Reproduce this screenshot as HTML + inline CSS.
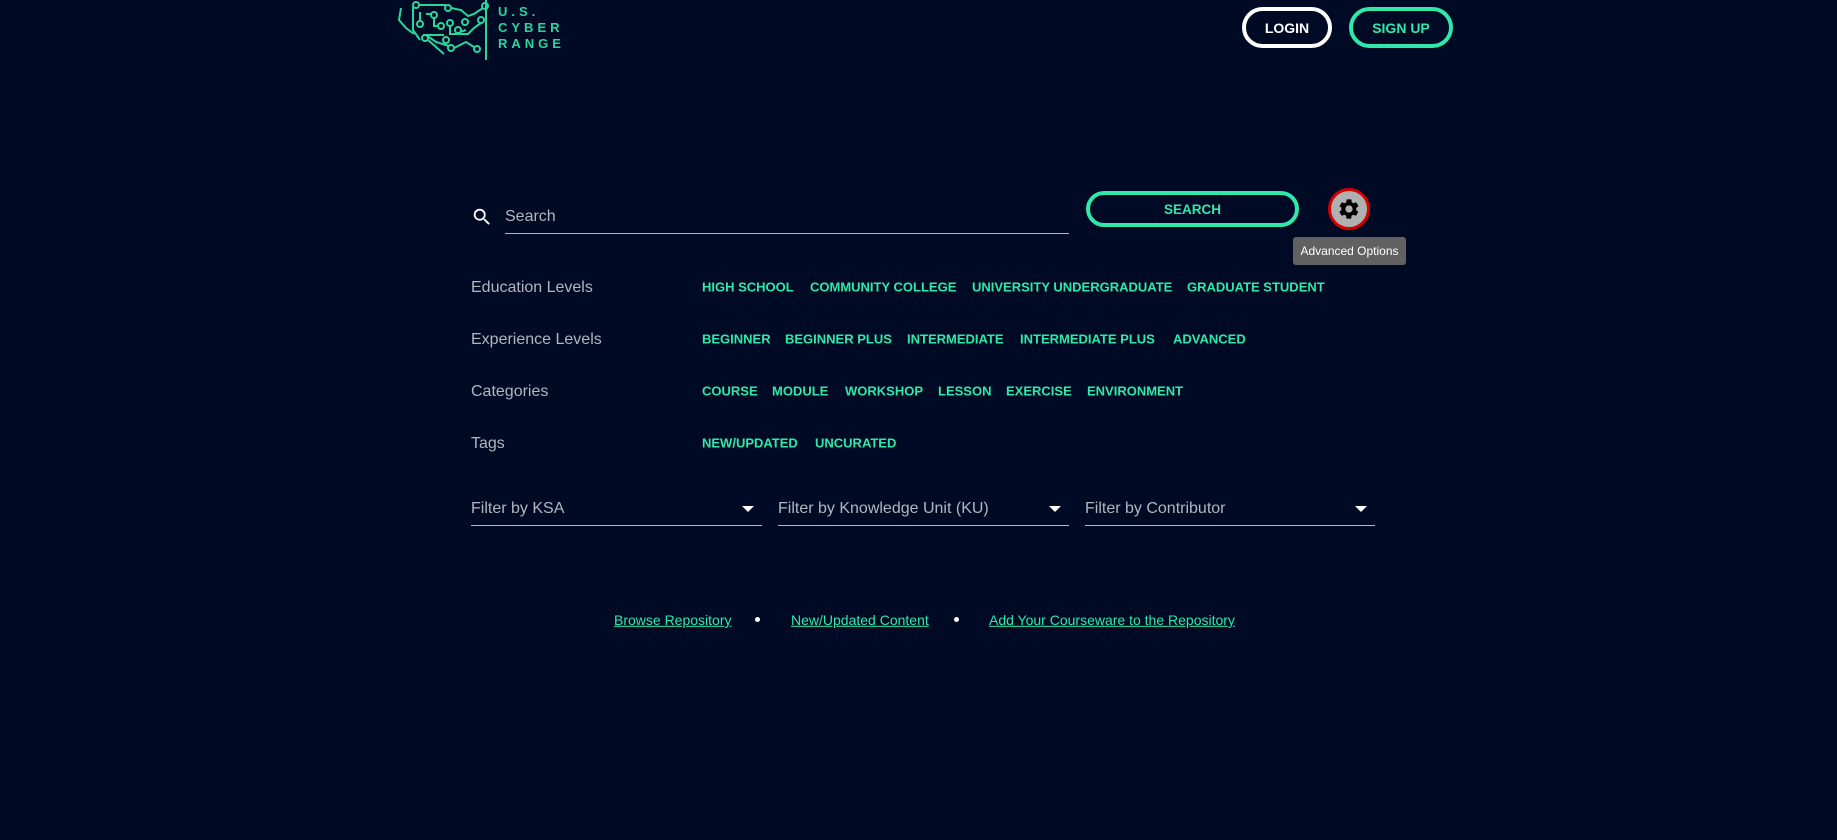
<!DOCTYPE html>
<html><head><meta charset="utf-8"><style>
*{margin:0;padding:0;box-sizing:border-box}
body{width:1837px;height:840px;background:#000a24;font-family:"Liberation Sans",sans-serif;position:relative;overflow:hidden}
.a{position:absolute;white-space:nowrap}
.lbl{color:#b3b6c0;font-size:16px;transform:translateY(-40%)}
.chip{color:#30e8aa;font-size:13px;font-weight:bold;transform:translateY(-50%)}
.btn{position:absolute;border-radius:22px;font-weight:bold;font-size:14px;display:flex;align-items:center;justify-content:center}
.fl{position:absolute;border-bottom:1px solid #b3b6c0;height:32px;color:#b3b6c0;font-size:16px}
.fl span.t{position:absolute;left:0;top:6px}
.fl .arr{position:absolute;right:8px;top:12px;width:0;height:0;border-left:6px solid transparent;border-right:6px solid transparent;border-top:6px solid #fff}
.lk{color:#30e8aa;text-decoration:underline;font-size:14px;transform:translateY(-45%)}
.dot{width:5px;height:5px;border-radius:50%;background:#fff}
</style></head><body>
<svg class="a" style="left:396px;top:0" width="160" height="62" viewBox="0 0 160 62" fill="none" stroke="#2ad69c" stroke-width="2">
<circle cx="20" cy="5" r="3"/><circle cx="52" cy="8" r="3"/><circle cx="89" cy="6" r="3"/><circle cx="38" cy="15" r="3"/><circle cx="24" cy="24" r="3"/><circle cx="45" cy="26" r="3"/><circle cx="54" cy="23" r="3"/><circle cx="69" cy="22" r="3"/><circle cx="62" cy="30" r="3"/><circle cx="85" cy="20" r="3"/><circle cx="29" cy="38" r="3"/><circle cx="50" cy="40" r="3"/><circle cx="55" cy="48" r="3"/><circle cx="81" cy="49" r="3"/>
<path d="M23 5H50M55 8L65 10L72 16L78 14L87 8M17 7V30L24 40M24 12V21M38 18V26L42 26M30 14H36M54 26V34H72L78 28L85 23M64 32L70 30M48 35L30 35L40 42L53 46M58 48L70 42L78 47M32 40L48 54M5 8L3 20L10 28L18 34"/>
<line x1="90" y1="0" x2="90" y2="60"/>
</svg>
<div class="a" style="left:498px;top:4px;color:#2ad69c;font-size:13px;font-weight:bold;letter-spacing:4px;line-height:16px">U.S.<br>CYBER<br>RANGE</div>
<div class="btn" style="left:1242px;top:7px;width:90px;height:41px;border:4px solid #fff;color:#fff">LOGIN</div>
<div class="btn" style="left:1349px;top:7px;width:104px;height:41px;border:4px solid #30e8aa;color:#30e8aa">SIGN UP</div>
<svg class="a" style="left:471px;top:206px" width="22" height="22" viewBox="0 0 24 24"><path fill="#fff" d="M15.5 14h-.79l-.28-.27A6.470 6.470 0 0 0 16 9.5 6.5 6.5 0 1 0 9.5 16c1.61 0 3.090-.59 4.230-1.570l.27.28v.79l5 4.990L20.490 19l-4.990-5zm-6 0C7.010 14 5 11.990 5 9.5S7.010 5 9.5 5 14 7.010 14 9.5 11.990 14 9.5 14z"/></svg>
<div class="a" style="left:505px;top:208px;color:#b3b6c0;font-size:16px">Search</div>
<div class="a" style="left:505px;top:233px;width:564px;height:1px;background:#b3b6c0"></div>
<div class="btn" style="left:1086px;top:191px;width:213px;height:36px;border:4px solid #30e8aa;color:#30e8aa;font-size:13.5px">SEARCH</div>
<div class="a" style="left:1328px;top:188px;width:42px;height:42px;border-radius:50%;background:#b0b0b0;border:3px solid #d40000"></div>
<svg class="a" style="left:1337px;top:197px" width="24" height="24" viewBox="0 0 24 24"><path fill="#000" d="M19.14 12.94c.04-.3.06-.61.06-.94 0-.32-.02-.64-.07-.94l2.030-1.580a.49.49 0 0 0 .12-.61l-1.920-3.320a.488.488 0 0 0-.59-.22l-2.390.96c-.5-.38-1.030-.7-1.620-.94l-.36-2.540a.484.484 0 0 0-.48-.41h-3.840c-.24 0-.43.17-.47.41l-.36 2.540c-.59.24-1.130.57-1.620.94l-2.390-.96c-.22-.08-.47 0-.59.22L2.740 8.870c-.12.21-.8.47.12.61l2.030 1.580c-.05.3-.9.63-.9.94s.2.64.7.94l-2.030 1.580a.49.49 0 0 0-.12.61l1.920 3.320c.12.22.37.29.59.22l2.390-.96c.5.38 1.030.7 1.620.94l.36 2.540c.5.24.24.41.48.41h3.840c.24 0 .44-.17.47-.41l.36-2.540c.59-.24 1.130-.56 1.620-.94l2.390.96c.22.08.47 0 .59-.22l1.920-3.320c.12-.22.07-.47-.12-.61l-2.010-1.580zM12 15.6c-1.980 0-3.6-1.620-3.6-3.6s1.620-3.6 3.6-3.6 3.6 1.620 3.6 3.6-1.620 3.6-3.6 3.6z"/></svg>
<div class="a" style="left:1293px;top:237px;width:113px;height:28px;background:#616161;border-radius:3px;color:#fff;font-size:12px;display:flex;align-items:center;justify-content:center">Advanced Options</div>

<div class="a lbl" style="left:471px;top:286px">Education Levels</div>
<div class="a chip" style="left:702px;top:287px">HIGH SCHOOL</div>
<div class="a chip" style="left:810px;top:287px">COMMUNITY COLLEGE</div>
<div class="a chip" style="left:972px;top:287px">UNIVERSITY UNDERGRADUATE</div>
<div class="a chip" style="left:1187px;top:287px">GRADUATE STUDENT</div>

<div class="a lbl" style="left:471px;top:338px">Experience Levels</div>
<div class="a chip" style="left:702px;top:339px">BEGINNER</div>
<div class="a chip" style="left:785px;top:339px">BEGINNER PLUS</div>
<div class="a chip" style="left:907px;top:339px">INTERMEDIATE</div>
<div class="a chip" style="left:1020px;top:339px">INTERMEDIATE PLUS</div>
<div class="a chip" style="left:1173px;top:339px">ADVANCED</div>

<div class="a lbl" style="left:471px;top:390px">Categories</div>
<div class="a chip" style="left:702px;top:391px">COURSE</div>
<div class="a chip" style="left:772px;top:391px">MODULE</div>
<div class="a chip" style="left:845px;top:391px">WORKSHOP</div>
<div class="a chip" style="left:938px;top:391px">LESSON</div>
<div class="a chip" style="left:1006px;top:391px">EXERCISE</div>
<div class="a chip" style="left:1087px;top:391px">ENVIRONMENT</div>

<div class="a lbl" style="left:471px;top:442px">Tags</div>
<div class="a chip" style="left:702px;top:443px">NEW/UPDATED</div>
<div class="a chip" style="left:815px;top:443px">UNCURATED</div>

<div class="fl" style="left:471px;top:494px;width:291px"><span class="t">Filter by KSA</span><span class="arr"></span></div>
<div class="fl" style="left:778px;top:494px;width:291px"><span class="t">Filter by Knowledge Unit (KU)</span><span class="arr"></span></div>
<div class="fl" style="left:1085px;top:494px;width:290px"><span class="t">Filter by Contributor</span><span class="arr"></span></div>

<div class="a lk" style="left:614px;top:619px">Browse Repository</div>
<div class="a dot" style="left:755px;top:617px"></div>
<div class="a lk" style="left:791px;top:619px">New/Updated Content</div>
<div class="a dot" style="left:954px;top:617px"></div>
<div class="a lk" style="left:989px;top:619px">Add Your Courseware to the Repository</div>
</body></html>
